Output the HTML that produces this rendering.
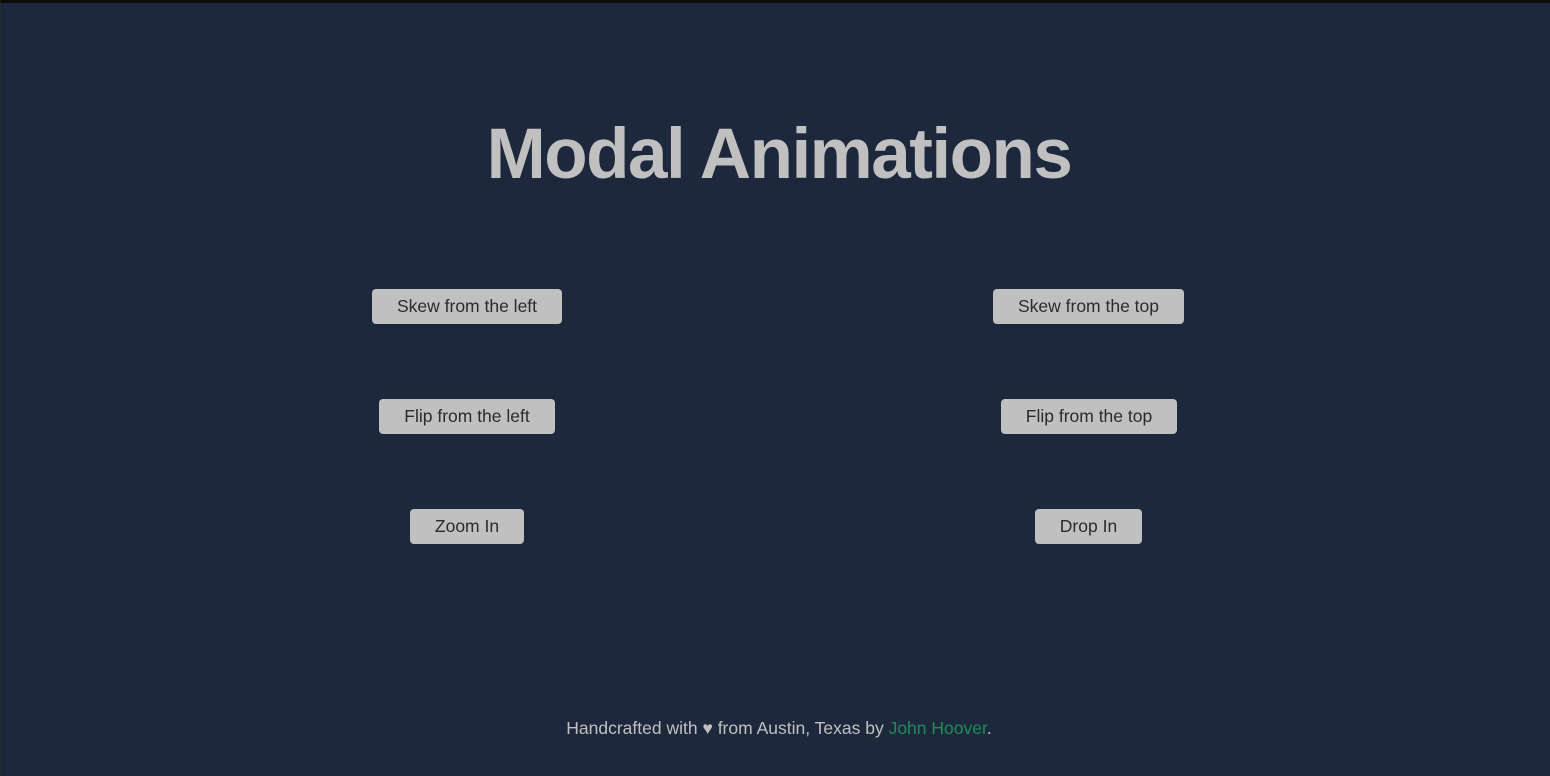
<!DOCTYPE html>
<html><head><style>
html,body{margin:0;padding:0}
body{width:1550px;height:776px;background:#1e283c;border-top:3px solid #0b0b0b;border-left:1px solid #2a2a2a;box-sizing:border-box;position:relative;overflow:hidden;font-family:"Liberation Sans",sans-serif}
h1{position:absolute;left:0;width:1556px;top:112px;margin:0;text-align:center;font-size:71px;letter-spacing:-1.5px;font-weight:bold;color:#c0c0c0;line-height:80px}
.b{position:absolute;height:35px;background:#c0c0c0;border-radius:4px;color:#2b2b2b;font-size:17.5px;line-height:35px;text-align:center}
.f{position:absolute;left:0;width:1556px;top:715px;text-align:center;font-size:17.5px;color:#c0c0c0}
.f a{color:#1f8a5a;text-decoration:none}
</style></head><body>
<h1>Modal Animations</h1>
<div class="b" style="left:371px;top:286px;width:190px">Skew from the left</div>
<div class="b" style="left:992px;top:286px;width:191px">Skew from the top</div>
<div class="b" style="left:378px;top:396px;width:176px">Flip from the left</div>
<div class="b" style="left:1000px;top:396px;width:176px">Flip from the top</div>
<div class="b" style="left:409px;top:506px;width:114px">Zoom In</div>
<div class="b" style="left:1034px;top:506px;width:107px">Drop In</div>
<div class="f">Handcrafted with ♥ from Austin, Texas by <a>John Hoover</a>.</div>
</body></html>
